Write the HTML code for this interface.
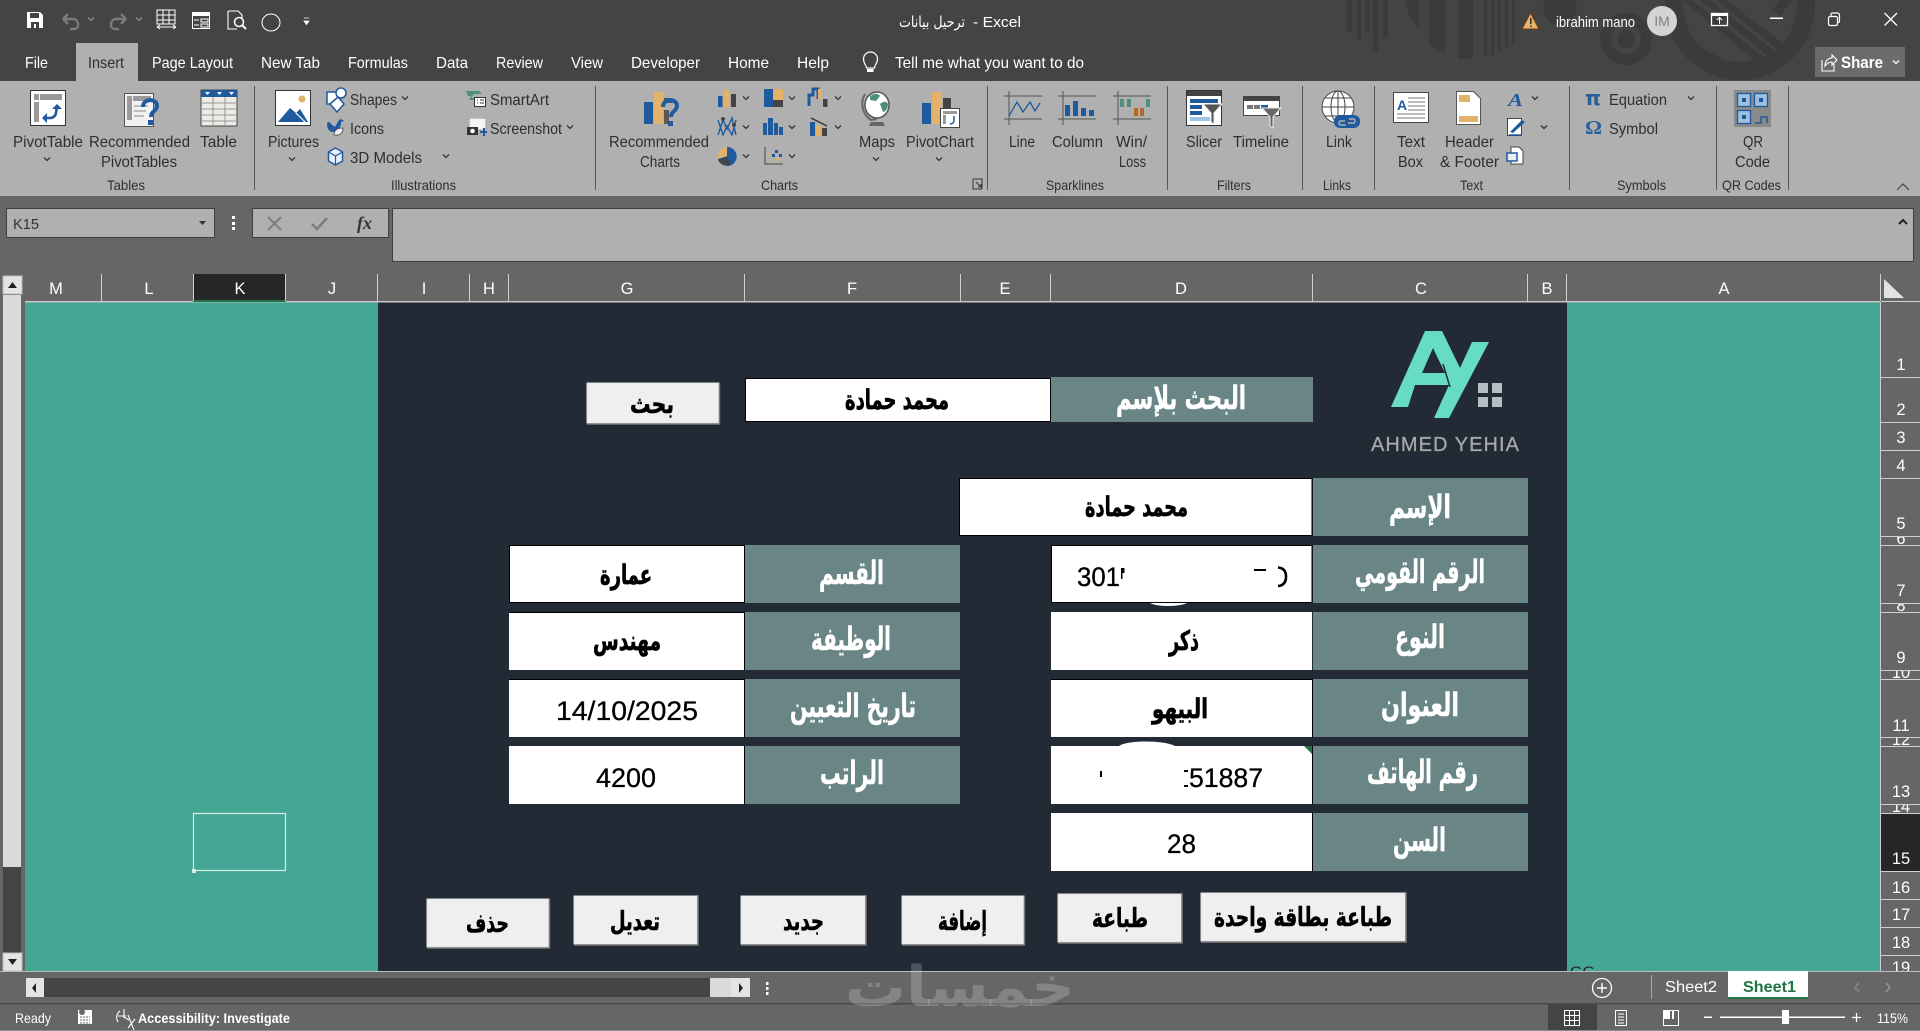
<!DOCTYPE html>
<html lang="en">
<head>
<meta charset="utf-8">
<title>Excel</title>
<style>
html,body{margin:0;padding:0;background:#666;width:1920px;height:1031px;overflow:hidden}
svg{display:block;position:absolute;left:0;top:0}
text{font-family:"Liberation Sans",sans-serif}
.w{fill:#fff;font-size:16px}
.k{fill:#2e2e2e;font-size:16px}
.g{fill:#2e2e2e;font-size:14px}
.h{fill:#fff;font-size:16.5px;text-anchor:middle}
.ar{font-family:"DejaVu Sans",sans-serif;font-weight:bold}
.lab{fill:#fff;font-size:32px;stroke:#fff;stroke-width:.5px}
.val{fill:#000;font-size:27px;stroke:#000;stroke-width:.7px}
.btn{fill:#000;font-size:26px;stroke:#000;stroke-width:.6px}
.num{fill:#000;font-size:27px;stroke:#000;stroke-width:.3px;font-family:"Liberation Sans",sans-serif}
.bt{fill:#efefef;stroke:#e4e4e4;stroke-width:1}
</style>
</head>
<body>
<svg width="1920" height="1031" viewBox="0 0 1920 1031" xmlns="http://www.w3.org/2000/svg">
<defs>
<path id="c" d="M-3-1.5 0 1.5 3-1.5" fill="none" stroke="#333" stroke-width="1.3"/>
<path id="cl" d="M-3-1.5 0 1.5 3-1.5" fill="none" stroke="#8c8c8c" stroke-width="1.3"/>
<path id="cw" d="M-3-1.5 0 1.5 3-1.5" fill="none" stroke="#fff" stroke-width="1.3"/>
<clipPath id="topclip"><rect x="1300" y="0" width="520" height="81"/></clipPath>
<clipPath id="sheetclip"><rect x="0" y="0" width="1920" height="971"/></clipPath>
</defs>

<!-- title bar -->
<rect width="1920" height="81" fill="#444"/>
<g clip-path="url(#topclip)" fill="#3b3b3b">
<rect x="1347" y="0" width="5" height="32"/><rect x="1357" y="0" width="4" height="41"/><rect x="1365" y="0" width="5" height="32"/><rect x="1373" y="0" width="5" height="52"/><rect x="1383" y="0" width="5" height="37"/>
<path d="M1405 0h14v30c-7-8-12-18-14-30z"/>
<path d="M1429 0h16v53l-16-8z"/><rect x="1458" y="0" width="15" height="59"/><rect x="1484" y="0" width="3" height="57"/><rect x="1491" y="0" width="3" height="55"/><rect x="1498" y="0" width="3" height="52"/><rect x="1505" y="0" width="3" height="47"/><rect x="1512" y="0" width="3" height="45"/>
<circle cx="1560" cy="8" r="17"/>
<circle cx="1626" cy="39" r="20.500" fill="none" stroke="#3b3b3b" stroke-width="11"/><circle cx="1626" cy="39" r="9"/>
<circle cx="1740" cy="5" r="66" fill="none" stroke="#3b3b3b" stroke-width="18"/>
<path d="M1683 0h9l75 60-7 5zM1700 0h9l67 52-7 5zM1717 0h9l58 44-7 5zM1685 38l60 34-14 1-40-22zM1780 0h12l-12 16-8-6z"/>
</g>

<!-- QAT -->
<path d="M27 12h13l3 3v13H27z" fill="#fff"/><rect x="30" y="13" width="9" height="5" fill="#444"/><rect x="31" y="22" width="8" height="6" fill="#444"/><rect x="34" y="24" width="2" height="4" fill="#fff"/>
<path d="M63 19l5-5M63 19l5 5M63 19h10a5 5 0 0 1 5 5v2a4 4 0 0 1-4 3h-4" fill="none" stroke="#7a7a7a" stroke-width="2.4"/>
<use href="#cl" x="91" y="19"/>
<path d="M126 19l-5-5M126 19l-5 5M126 19h-10a5 5 0 0 0-5 5v2a4 4 0 0 0 4 3h4" fill="none" stroke="#7a7a7a" stroke-width="2.4"/>
<use href="#cl" x="139" y="19"/>
<path d="M157 10h18v14h-18zM157 15h18M157 20h18M163 10v14M169 10v14M157 27h19M157 27l3-2M157 27l3 2M176 27l-3-2M176 27l-3 2" fill="none" stroke="#fff" stroke-width="1"/>
<rect x="192.500" y="12.500" width="17" height="16" fill="none" stroke="#fff"/><rect x="193" y="13" width="16" height="3" fill="#fff"/><path d="M194 20h5M194 25h5M201 19h7v3h-7zM201 24h7v3h-7z" fill="none" stroke="#fff"/>
<path d="M228 11h10l4 4v3M228 11v18h9" fill="none" stroke="#fff" stroke-width="1.1"/><circle cx="239" cy="22" r="4.500" fill="none" stroke="#fff" stroke-width="1.5"/><path d="M242 25l4 4" stroke="#fff" stroke-width="2"/>
<ellipse cx="271" cy="22.500" rx="9" ry="8.500" fill="none" stroke="#fff" stroke-width="1"/>
<path d="M304 18h5M304 21h5l-2.500 3.500z" fill="#fff" stroke="#fff" stroke-width=".8"/>

<text class="ar" x="899" y="27" textLength="66" lengthAdjust="spacingAndGlyphs" style="font-size:15px;fill:#fff;font-weight:normal">ترحيل بيانات</text>
<text class="w" x="973" y="27" textLength="48" lengthAdjust="spacingAndGlyphs" style="font-size:15px">-  Excel</text>

<path d="M1530.500 13l8.500 16h-17z" fill="#e9b36a" stroke="#6b3a12"/><rect x="1530" y="18" width="1.600" height="6" fill="#333"/><rect x="1530" y="25.500" width="1.600" height="1.600" fill="#333"/>
<text class="w" x="1556" y="27" textLength="79" lengthAdjust="spacingAndGlyphs" style="font-size:15px">ibrahim mano</text>
<circle cx="1662" cy="21" r="15" fill="#d4d4d4"/><text x="1662" y="26" text-anchor="middle" style="font-size:14px;fill:#808080">IM</text>
<rect x="1711.500" y="13.500" width="16" height="12" fill="none" stroke="#fff" stroke-width="1.300"/><rect x="1711" y="13" width="17" height="3" fill="#fff"/><path d="M1719.500 24v-6M1717 20l2.500-2.500 2.500 2.500" fill="none" stroke="#fff"/>
<rect x="1770" y="17.500" width="13" height="1.500" fill="#fff"/>
<rect x="1828.500" y="16.500" width="9" height="9" rx="1.500" fill="none" stroke="#fff" stroke-width="1.200"/><path d="M1831 16v-2a1.500 1.500 0 0 1 1.500-1h5a2 2 0 0 1 2 2v6a1.500 1.500 0 0 1-1.500 1.500h-1" fill="none" stroke="#fff" stroke-width="1.200"/>
<path d="M1884.500 13l12.500 12.500M1897 13l-12.500 12.500" stroke="#fff" stroke-width="1.300"/>

<!-- tabs -->
<rect x="76" y="43" width="62" height="38" fill="#b0b0b0"/>
<text class="w" x="25" y="68" textLength="23" lengthAdjust="spacingAndGlyphs">File</text>
<text class="k" x="88" y="68" textLength="36" lengthAdjust="spacingAndGlyphs">Insert</text>
<text class="w" x="152" y="68" textLength="81" lengthAdjust="spacingAndGlyphs">Page Layout</text>
<text class="w" x="261" y="68" textLength="59" lengthAdjust="spacingAndGlyphs">New Tab</text>
<text class="w" x="348" y="68" textLength="60" lengthAdjust="spacingAndGlyphs">Formulas</text>
<text class="w" x="436" y="68" textLength="32" lengthAdjust="spacingAndGlyphs">Data</text>
<text class="w" x="496" y="68" textLength="47" lengthAdjust="spacingAndGlyphs">Review</text>
<text class="w" x="571" y="68" textLength="32" lengthAdjust="spacingAndGlyphs">View</text>
<text class="w" x="631" y="68" textLength="69" lengthAdjust="spacingAndGlyphs">Developer</text>
<text class="w" x="728" y="68" textLength="41" lengthAdjust="spacingAndGlyphs">Home</text>
<text class="w" x="797" y="68" textLength="32" lengthAdjust="spacingAndGlyphs">Help</text>
<path d="M866.500 68c0-3-3-4-3-9a7 7 0 0 1 14 0c0 5-3 6-3 9z" fill="none" stroke="#fff" stroke-width="1.200"/><rect x="867" y="69" width="6.500" height="3" fill="#fff"/>
<text class="w" x="895" y="68" textLength="189" lengthAdjust="spacingAndGlyphs">Tell me what you want to do</text>
<rect x="1815" y="47" width="90" height="30" fill="#6b6b6b"/>
<path d="M1822 60v11h12v-7M1825 66c0-5 3-8 7-8v-3l5 5-5 5v-3c-3 0-5 1-7 4z" fill="none" stroke="#fff" stroke-width="1.100"/>
<text x="1841" y="68" textLength="42" lengthAdjust="spacingAndGlyphs" style="font-size:17px;font-weight:bold;fill:#fff">Share</text>
<use href="#cw" x="1896" y="62"/>

<!-- ribbon -->
<rect y="81" width="1920" height="115" fill="#b0b0b0"/>
<g fill="#555">
<rect x="254" y="86" width="1" height="104"/><rect x="595" y="86" width="1" height="104"/><rect x="987" y="86" width="1" height="104"/><rect x="1167" y="86" width="1" height="104"/><rect x="1302" y="86" width="1" height="104"/><rect x="1374" y="86" width="1" height="104"/><rect x="1569" y="86" width="1" height="104"/><rect x="1716" y="86" width="1" height="104"/><rect x="1788" y="86" width="1" height="104"/>
</g>

<!-- ribbon labels -->
<text class="k" x="13" y="147" textLength="70" lengthAdjust="spacingAndGlyphs">PivotTable</text><use href="#c" x="47" y="159"/>
<text class="k" x="89" y="147" textLength="101" lengthAdjust="spacingAndGlyphs">Recommended</text>
<text class="k" x="101" y="167" textLength="76" lengthAdjust="spacingAndGlyphs">PivotTables</text>
<text class="k" x="200" y="147" textLength="37" lengthAdjust="spacingAndGlyphs">Table</text>
<text class="g" x="107" y="190" textLength="38" lengthAdjust="spacingAndGlyphs">Tables</text>
<text class="k" x="268" y="147" textLength="51" lengthAdjust="spacingAndGlyphs">Pictures</text><use href="#c" x="292" y="159"/>
<text class="k" x="350" y="105" textLength="47" lengthAdjust="spacingAndGlyphs">Shapes</text><use href="#c" x="405" y="98"/>
<text class="k" x="350" y="134" textLength="34" lengthAdjust="spacingAndGlyphs">Icons</text>
<text class="k" x="350" y="163" textLength="72" lengthAdjust="spacingAndGlyphs">3D Models</text><use href="#c" x="446" y="156"/>
<text class="k" x="490" y="105" textLength="59" lengthAdjust="spacingAndGlyphs">SmartArt</text>
<text class="k" x="490" y="134" textLength="72" lengthAdjust="spacingAndGlyphs">Screenshot</text><use href="#c" x="570" y="127"/>
<text class="g" x="391" y="190" textLength="65" lengthAdjust="spacingAndGlyphs">Illustrations</text>
<text class="k" x="609" y="147" textLength="100" lengthAdjust="spacingAndGlyphs">Recommended</text>
<text class="k" x="640" y="167" textLength="40" lengthAdjust="spacingAndGlyphs">Charts</text>
<text class="k" x="859" y="147" textLength="36" lengthAdjust="spacingAndGlyphs">Maps</text><use href="#c" x="876" y="159"/>
<text class="k" x="906" y="147" textLength="68" lengthAdjust="spacingAndGlyphs">PivotChart</text><use href="#c" x="939" y="159"/>
<text class="g" x="761" y="190" textLength="37" lengthAdjust="spacingAndGlyphs">Charts</text>
<path d="M973 179h9v10M973 179v10h9M976 182l5 5M981 184v3h-3" fill="none" stroke="#333"/>
<text class="k" x="1009" y="147" textLength="26" lengthAdjust="spacingAndGlyphs">Line</text>
<text class="k" x="1052" y="147" textLength="51" lengthAdjust="spacingAndGlyphs">Column</text>
<text class="k" x="1116" y="147" textLength="31" lengthAdjust="spacingAndGlyphs">Win/</text>
<text class="k" x="1119" y="167" textLength="27" lengthAdjust="spacingAndGlyphs">Loss</text>
<text class="g" x="1046" y="190" textLength="58" lengthAdjust="spacingAndGlyphs">Sparklines</text>
<text class="k" x="1186" y="147" textLength="36" lengthAdjust="spacingAndGlyphs">Slicer</text>
<text class="k" x="1233" y="147" textLength="56" lengthAdjust="spacingAndGlyphs">Timeline</text>
<text class="g" x="1217" y="190" textLength="34" lengthAdjust="spacingAndGlyphs">Filters</text>
<text class="k" x="1326" y="147" textLength="26" lengthAdjust="spacingAndGlyphs">Link</text>
<text class="g" x="1323" y="190" textLength="28" lengthAdjust="spacingAndGlyphs">Links</text>
<text class="k" x="1397" y="147" textLength="28" lengthAdjust="spacingAndGlyphs">Text</text>
<text class="k" x="1398" y="167" textLength="25" lengthAdjust="spacingAndGlyphs">Box</text>
<text class="k" x="1445" y="147" textLength="49" lengthAdjust="spacingAndGlyphs">Header</text>
<text class="k" x="1440" y="167" textLength="59" lengthAdjust="spacingAndGlyphs">&amp; Footer</text>
<text class="g" x="1460" y="190" textLength="23" lengthAdjust="spacingAndGlyphs">Text</text>
<text class="k" x="1609" y="105" textLength="58" lengthAdjust="spacingAndGlyphs">Equation</text><use href="#c" x="1691" y="98"/>
<text class="k" x="1609" y="134" textLength="49" lengthAdjust="spacingAndGlyphs">Symbol</text>
<text class="g" x="1617" y="190" textLength="49" lengthAdjust="spacingAndGlyphs">Symbols</text>
<text class="k" x="1743" y="147" textLength="20" lengthAdjust="spacingAndGlyphs">QR</text>
<text class="k" x="1735" y="167" textLength="35" lengthAdjust="spacingAndGlyphs">Code</text>
<text class="g" x="1722" y="190" textLength="59" lengthAdjust="spacingAndGlyphs">QR Codes</text>
<path d="M1897 190l6-6 6 6" fill="none" stroke="#444" stroke-width="1.200"/>

<!-- PivotTable icon -->
<rect x="30.500" y="90.500" width="35" height="35" fill="#fff" stroke="#333"/><rect x="40" y="94" width="22" height="6" fill="#999"/><rect x="34" y="94" width="5" height="6" fill="#999"/><rect x="34" y="102" width="5" height="20" fill="#999"/>
<path d="M57 106l-1 7c-.500 3-3 5-6 5h-4" fill="none" stroke="#1f5a9e" stroke-width="2.600"/><path d="M52 109l5-5 5 5zM47 113l-5 5 5 5z" fill="#1f5a9e"/>
<!-- Recommended Pivot -->
<rect x="124.500" y="93.500" width="29" height="33" fill="#f2f2f2" stroke="#555"/><rect x="127" y="96" width="5" height="24" fill="#999"/><rect x="133" y="96" width="18" height="5" fill="#999"/><path d="M134 106h14M134 111h12M134 116h10" stroke="#bbb" stroke-width="2"/>
<path d="M143 107c0-9 14-9 14-1 0 5-6 5-6 11" fill="none" stroke="#1f5a9e" stroke-width="4"/><rect x="148" y="120" width="5" height="5" fill="#1f5a9e"/>
<!-- Table -->
<rect x="201" y="90" width="36" height="36" fill="#ecebe6" stroke="#444"/><rect x="201" y="90" width="36" height="7" fill="#1f5a9e"/>
<path d="M205 92h5l-2.500 3zM217 92h5l-2.500 3zM229 92h5l-2.500 3z" fill="#fff"/>
<path d="M201 103h36M201 109h36M201 115h36M201 121h36M213 97v29M225 97v29" stroke="#999" stroke-width="1" fill="none"/>
<!-- Pictures -->
<rect x="275.500" y="90.500" width="35" height="35" fill="#fff" stroke="#333"/><circle cx="302" cy="99" r="3.500" fill="#e2b26a"/>
<path d="M278 122l12-14 6 5 4-4 8 13z" fill="#1f5a9e"/><path d="M296 113l10 10" stroke="#fff" stroke-width="1.200"/>
<!-- Shapes -->
<rect x="327" y="92" width="12" height="12" fill="#fff" stroke="#1f5a9e" stroke-width="1.500"/><path d="M338 97l6 7-7 8-7-8z" fill="#fff" stroke="#1f5a9e" stroke-width="1.500"/><circle cx="341" cy="93" r="5" fill="#fff" stroke="#1f5a9e" stroke-width="1.500"/>
<!-- Icons -->
<path d="M327 124c0-2 3-3 4 0l4 3c2-3 3-7 6-8l3 2-3 1c0 6-3 10-8 10-4 0-6-4-6-8z" fill="#1f5a9e"/><path d="M334 135c0-5 4-7 9-7 0 5-3 8-9 7z" fill="#eee" stroke="#444" stroke-width=".8"/>
<!-- 3D -->
<path d="M335.500 148l7 4v9l-7 4-7-4v-9z" fill="#eef" stroke="#1f5a9e" stroke-width="1.500"/><path d="M328.500 152l7 4 7-4M335.500 156v9" fill="none" stroke="#1f5a9e" stroke-width="1.200"/>
<!-- SmartArt -->
<path d="M466 91h13l3 3h-8l-3 4h8l-2 2h-8l2-4h-3z" fill="#4e8f80"/><rect x="474.500" y="97.500" width="11" height="9" fill="#fff" stroke="#333"/><path d="M477 100h1M477 103h1M480 100h4M480 103h4" stroke="#333"/>
<!-- Screenshot -->
<rect x="470" y="119" width="15" height="10" fill="#f5f5f5" stroke="#eee" stroke-dasharray="1.500 1"/><rect x="467" y="127" width="11" height="8" fill="#333"/><circle cx="472.500" cy="131" r="2.300" fill="#fff"/><path d="M484 128v8M480 132h7" stroke="#1f5a9e" stroke-width="2"/>
<!-- Recommended charts -->
<rect x="644" y="102" width="9" height="22" fill="#1f5a9e"/><rect x="654" y="92" width="9" height="32" fill="#e2b26a"/><rect x="664" y="98" width="8" height="5" fill="#555"/>
<path d="M663 107c0-9 14-9 14-1 0 5-6 5-6 11" fill="none" stroke="#1f5a9e" stroke-width="4"/><rect x="668" y="121" width="5" height="5" fill="#1f5a9e"/><rect x="664" y="110" width="5" height="14" fill="#444" opacity=".8"/>
<!-- chart minis -->
<rect x="718" y="96" width="4.500" height="11" fill="#1f5a9e"/><rect x="724" y="90" width="5" height="17" fill="#e2b26a"/><rect x="731" y="94" width="5" height="13" fill="#444"/><use href="#c" x="746" y="98"/>
<rect x="764" y="89" width="9" height="18" fill="#1f5a9e"/><rect x="773" y="89" width="10" height="11" fill="#e2b26a"/><rect x="773" y="100" width="10" height="7" fill="#444"/><use href="#c" x="792" y="98"/>
<path d="M809 106v-11h4v-6h5v10" fill="none" stroke="#1f5a9e" stroke-width="3"/><rect x="818" y="89" width="4" height="10" fill="#e2b26a"/><rect x="823" y="99" width="4.500" height="8" fill="#444"/><use href="#c" x="838" y="98"/>
<path d="M718 135l5-15 4 9 5-11 4 17M718 120l5 15 4-9 5 9 4-15" fill="none" stroke="#1f5a9e" stroke-width="1.400"/><circle cx="723" cy="119" r="2" fill="#444"/><circle cx="734" cy="125" r="2" fill="#444"/><use href="#c" x="746" y="127"/>
<rect x="763" y="123" width="4" height="12" fill="#1f5a9e"/><rect x="768" y="118" width="5" height="17" fill="#1f5a9e"/><rect x="774" y="123" width="4" height="12" fill="#1f5a9e"/><rect x="779" y="127" width="4" height="8" fill="#1f5a9e"/><use href="#c" x="792" y="127"/>
<rect x="810" y="122" width="5" height="14" fill="#1f5a9e"/><rect x="816" y="126" width="5" height="10" fill="#e2b26a"/><rect x="822" y="128" width="5" height="8" fill="#444"/><path d="M811 118l16 8" stroke="#333" stroke-width="1.300"/><use href="#c" x="838" y="127"/>
<path d="M727 147a9.500 9.500 0 1 1-9 12l9-3z" fill="#1f5a9e"/><path d="M727 147v9l-9 3a9.500 9.500 0 0 1 9-12z" fill="#e2b26a"/><path d="M718 160l9-3 4 7a9.500 9.500 0 0 1-13-4z" fill="#444"/><use href="#c" x="746" y="156"/>
<path d="M765 147v17h18" fill="none" stroke="#444"/><g fill="#e2b26a"><rect x="767" y="153" width="3" height="3"/><rect x="776" y="158" width="3" height="3"/></g><g fill="#1f5a9e"><rect x="772" y="154" width="3" height="3"/><rect x="775" y="150" width="3" height="3"/><rect x="779" y="154" width="3" height="3"/></g><use href="#c" x="792" y="156"/>
<!-- Maps -->
<ellipse cx="877" cy="105" rx="12" ry="13" fill="#fff" stroke="#555" stroke-width="1.500"/><path d="M870 96c4-3 8-3 10 0l-4 5-6-1zM880 104c3-3 7-3 8 0 0 5-3 8-5 8z" fill="#4e8f80"/><path d="M865 94c-5 8-3 20 6 26l6-1" fill="none" stroke="#666" stroke-width="2"/><path d="M871 122h12l2 4h-16z" fill="#666"/>
<!-- PivotChart -->
<rect x="922" y="103" width="9" height="21" fill="#1f5a9e"/><rect x="932" y="92" width="10" height="32" fill="#e2b26a"/><rect x="943" y="98" width="8" height="10" fill="#444"/>
<rect x="940.500" y="108.500" width="19" height="19" fill="#fff" stroke="#444"/><rect x="943" y="111" width="14" height="3" fill="#999"/><rect x="943" y="115" width="3" height="9" fill="#999"/><path d="M954 116v4c0 3-2 4-4 4" fill="none" stroke="#1f5a9e" stroke-width="1.500"/>
<!-- Sparklines -->
<path d="M1004 96h38M1004 119h38M1009 91v34" stroke="#555" fill="none"/><path d="M1009 116l8-14 6 10 7-10 5 9 5-8" fill="none" stroke="#1f5a9e" stroke-width="1.300"/>
<path d="M1058 96h38M1058 119h38M1063 91v34" stroke="#555" fill="none"/><rect x="1065" y="105" width="5" height="11" fill="#1f5a9e"/><rect x="1073" y="101" width="5" height="15" fill="#1f5a9e"/><rect x="1081" y="108" width="5" height="8" fill="#1f5a9e"/><rect x="1089" y="110" width="5" height="6" fill="#1f5a9e"/>
<path d="M1113 96h38M1113 119h38M1118 91v34" stroke="#555" fill="none"/><rect x="1120" y="99" width="4" height="8" fill="#4e8f80"/><rect x="1127" y="99" width="4" height="8" fill="#4e8f80"/><rect x="1134" y="108" width="4" height="8" fill="#b8681e"/><rect x="1140" y="108" width="4" height="8" fill="#b8681e"/><rect x="1146" y="99" width="4" height="8" fill="#4e8f80"/>
<!-- Slicer -->
<rect x="1186.500" y="90.500" width="35" height="35" fill="#fff" stroke="#333"/><rect x="1187" y="91" width="34" height="5" fill="#444"/><g fill="#1f5a9e"><rect x="1190" y="99" width="28" height="4"/><rect x="1190" y="105" width="12" height="4"/><rect x="1190" y="111" width="12" height="4"/></g><rect x="1190" y="117" width="20" height="4" fill="#9ec5e8"/>
<path d="M1203 104h19l-8 9v11l-3-2v-9z" fill="#555" stroke="#eee"/>
<!-- Timeline -->
<rect x="1243.500" y="96.500" width="36" height="19" fill="#fff" stroke="#444"/><rect x="1244" y="97" width="35" height="4" fill="#444"/><g fill="#777"><rect x="1247" y="105" width="6" height="4"/><rect x="1254" y="105" width="6" height="4"/></g><rect x="1261" y="105" width="7" height="4" fill="#1f5a9e"/>
<path d="M1262 108h19l-8 9v11l-3-2v-9z" fill="#666" stroke="#eee"/>
<!-- Link -->
<circle cx="1338" cy="107" r="16" fill="#fff" stroke="#444"/><ellipse cx="1338" cy="107" rx="7" ry="16" fill="none" stroke="#444"/><path d="M1322 107h32M1325 98h26M1325 116h26M1338 91v32" stroke="#444" fill="none"/>
<rect x="1334" y="115" width="26" height="13" rx="6" fill="#1f5a9e"/><path d="M1345 121h-5a2.500 2.500 0 0 0 0 4h6M1349 119h5a2.500 2.500 0 0 1 0 4h-6" fill="none" stroke="#b0b0b0" stroke-width="1.500"/>
<!-- Text Box -->
<rect x="1393.500" y="92.500" width="35" height="30" fill="#fff" stroke="#444"/><text x="1397" y="110" style="font-size:14px;font-weight:bold;fill:#1f5a9e">A</text><path d="M1408 98h17M1408 102h17M1408 106h17M1408 110h17M1397 114h28M1397 118h28" stroke="#777"/>
<!-- Header -->
<path d="M1456.500 91.500h17l7 7v26h-24z" fill="#fff" stroke="#555"/><rect x="1459" y="95" width="11" height="7" fill="#e2b26a"/><rect x="1459" y="116" width="19" height="6" fill="#e2b26a"/>
<!-- wordart etc -->
<text x="1508" y="106" textLength="15" lengthAdjust="spacingAndGlyphs" style="font-size:18px;font-style:italic;font-weight:bold;fill:#1f5a9e;font-family:'Liberation Serif',serif">A</text><use href="#c" x="1535" y="98"/>
<rect x="1507.500" y="118.500" width="14" height="17" fill="#fff" stroke="#444"/><path d="M1510 132l12-12 3 2-12 11z" fill="#1f5a9e"/><path d="M1509 135h12" stroke="#1f5a9e" stroke-width="1.500"/><use href="#c" x="1544" y="127"/>
<path d="M1511 147h8l4 4v13h-12z" fill="#fff" stroke="#444"/><rect x="1507" y="153" width="10" height="8" fill="#e8eef5" stroke="#1f5a9e" stroke-width="1.500"/>
<!-- symbols -->
<text x="1585" y="105" textLength="16" lengthAdjust="spacingAndGlyphs" style="font-size:20px;font-weight:bold;fill:#2a6099;font-family:'DejaVu Sans',sans-serif">π</text>
<text x="1585" y="134" textLength="17" lengthAdjust="spacingAndGlyphs" style="font-size:20px;font-weight:bold;fill:#2a6099;font-family:'Liberation Serif',serif">Ω</text>
<!-- QR -->
<rect x="1734" y="90" width="37" height="37" fill="#8a8a8a"/><g fill="#9cc0dd" stroke="#1f5a9e" stroke-width="1.300"><rect x="1737.500" y="93.500" width="13" height="13"/><rect x="1754.500" y="93.500" width="13" height="13"/><rect x="1737.500" y="110.500" width="13" height="13"/></g><g fill="#1f5a9e"><rect x="1742" y="98" width="4" height="4"/><rect x="1759" y="98" width="4" height="4"/><rect x="1742" y="115" width="4" height="4"/></g><path d="M1755 123h6v-6h6v6" fill="none" stroke="#1f5a9e" stroke-width="1.500"/>

<!-- formula bar -->
<rect y="196" width="1920" height="835" fill="#666"/>
<rect x="6.500" y="208.500" width="208" height="29" fill="#b0b0b0" stroke="#3f3f3f"/>
<text x="13" y="229" textLength="26" lengthAdjust="spacingAndGlyphs" style="font-size:15px;fill:#333">K15</text>
<path d="M199 221h7l-3.500 4z" fill="#333"/>
<g fill="#fff"><rect x="232" y="216" width="3" height="3"/><rect x="232" y="222" width="3" height="3"/><rect x="232" y="227" width="3" height="3"/></g>
<rect x="252.500" y="208.500" width="136" height="29" fill="#b0b0b0" stroke="#3f3f3f"/>
<path d="M268 217l13 13M281 217l-13 13" stroke="#7d7d7d" stroke-width="2"/>
<path d="M312 224l5 5 10-11" fill="none" stroke="#7d7d7d" stroke-width="2.600"/>
<text x="357" y="229" textLength="15" lengthAdjust="spacingAndGlyphs" style="font-family:'Liberation Serif',serif;font-style:italic;font-weight:bold;font-size:18px;fill:#333">fx</text>
<rect x="392.500" y="208.500" width="1521" height="53" fill="#b0b0b0" stroke="#3f3f3f"/>
<path d="M1899 224l4-4 4 4" fill="none" stroke="#222" stroke-width="2"/>

<!-- sheet -->
<g clip-path="url(#sheetclip)">
<rect x="25" y="302" width="353" height="669" fill="#44a694"/>
<rect x="378" y="302" width="1189" height="669" fill="#222a35"/>
<rect x="1567" y="302" width="313" height="669" fill="#44a694"/>
<text x="1570" y="976" textLength="25" lengthAdjust="spacingAndGlyphs" style="font-size:14px;fill:#222">GG</text>
</g>

<!-- col header -->
<rect x="193" y="274" width="93" height="27" fill="#262626"/>
<rect x="25" y="301" width="1855" height="1.500" fill="#c8c8c8"/>
<rect x="193" y="300" width="93" height="2" fill="#217346"/>
<g fill="#cfcfcf">
<rect x="101" y="274" width="1" height="27"/><rect x="193" y="274" width="1" height="27"/><rect x="285" y="274" width="1" height="27"/><rect x="377" y="274" width="1" height="27"/><rect x="469" y="274" width="1" height="27"/><rect x="508" y="274" width="1" height="27"/><rect x="744" y="274" width="1" height="27"/><rect x="960" y="274" width="1" height="27"/><rect x="1050" y="274" width="1" height="27"/><rect x="1312" y="274" width="1" height="27"/><rect x="1527" y="274" width="1" height="27"/><rect x="1566" y="274" width="1" height="27"/><rect x="1880" y="274" width="1" height="27"/>
</g>
<text class="h" x="56" y="294">M</text><text class="h" x="149" y="294">L</text><text class="h" x="240" y="294">K</text><text class="h" x="332" y="294">J</text><text class="h" x="424" y="294">I</text><text class="h" x="489" y="294">H</text><text class="h" x="627" y="294">G</text><text class="h" x="852" y="294">F</text><text class="h" x="1005" y="294">E</text><text class="h" x="1181" y="294">D</text><text class="h" x="1421" y="294">C</text><text class="h" x="1547" y="294">B</text><text class="h" x="1724" y="294">A</text>
<path d="M1884 279l20 19h-20z" fill="#e2e2e2"/>

<!-- row header -->
<rect x="1880" y="302" width="1" height="669" fill="#cfcfcf"/>
<rect x="1881" y="814" width="39" height="57" fill="#262626"/>
<g fill="#d0d0d0">
<rect x="1881" y="301" width="39" height="1"/><rect x="1881" y="377" width="39" height="1"/><rect x="1881" y="422" width="39" height="1"/><rect x="1881" y="450" width="39" height="1"/><rect x="1881" y="478" width="39" height="1"/><rect x="1881" y="536" width="39" height="1"/><rect x="1881" y="545" width="39" height="1"/><rect x="1881" y="603" width="39" height="1"/><rect x="1881" y="612" width="39" height="1"/><rect x="1881" y="670" width="39" height="1"/><rect x="1881" y="679" width="39" height="1"/><rect x="1881" y="737" width="39" height="1"/><rect x="1881" y="746" width="39" height="1"/><rect x="1881" y="804" width="39" height="1"/><rect x="1881" y="813" width="39" height="1"/><rect x="1881" y="871" width="39" height="1"/><rect x="1881" y="899" width="39" height="1"/><rect x="1881" y="927" width="39" height="1"/><rect x="1881" y="955" width="39" height="1"/>
</g>
<text class="h" x="1901" y="370">1</text><text class="h" x="1901" y="415">2</text><text class="h" x="1901" y="443">3</text><text class="h" x="1901" y="471">4</text><text class="h" x="1901" y="529">5</text><text class="h" x="1901" y="596">7</text><text class="h" x="1901" y="663">9</text><text class="h" x="1901" y="731">11</text><text class="h" x="1901" y="797">13</text><text class="h" x="1901" y="864">15</text><text class="h" x="1901" y="893">16</text><text class="h" x="1901" y="920">17</text><text class="h" x="1901" y="948">18</text>
<svg x="1881" y="956" width="39" height="15"><text class="h" x="20" y="17">19</text></svg>
<svg x="1881" y="537" width="39" height="8"><text class="h" x="20" y="7">6</text></svg>
<svg x="1881" y="604" width="39" height="8"><text class="h" x="20" y="7">8</text></svg>
<svg x="1881" y="671" width="39" height="8"><text class="h" x="20" y="7">10</text></svg>
<svg x="1881" y="738" width="39" height="8"><text class="h" x="20" y="7">12</text></svg>
<svg x="1881" y="805" width="39" height="8"><text class="h" x="20" y="7">14</text></svg>

<!-- selection -->
<rect x="193.500" y="813.500" width="92" height="57" fill="none" stroke="#d8efe6" stroke-width="1.200"/>
<rect x="192" y="869" width="4" height="4" fill="#d8efe6"/>

<!-- scrollbars -->
<rect x="3" y="276" width="19" height="18" fill="#e4e4e4" stroke="#bbb"/><path d="M8 288l4.500-6 4.500 6z" fill="#222"/>
<rect x="3" y="295" width="18" height="572" fill="#dadada"/>
<rect x="3" y="867" width="18" height="86" fill="#454545"/>
<rect x="3" y="953" width="19" height="18" fill="#e4e4e4" stroke="#bbb"/><path d="M8 959l4.500 6 4.500-6z" fill="#222"/>
<rect y="971" width="1920" height="1" fill="#bdbdbd"/>
<rect x="26" y="978" width="18" height="19" fill="#e4e4e4"/><path d="M36 983l-4 5 4 5z" fill="#222"/>
<rect x="44" y="978" width="666" height="19" fill="#454545"/>
<rect x="710" y="978" width="21" height="19" fill="#dadada"/>
<rect x="731" y="978" width="19" height="19" fill="#e4e4e4"/><path d="M739 983l4 5-4 5z" fill="#222"/>
<g fill="#fff"><rect x="766" y="982" width="2.500" height="3"/><rect x="766" y="987" width="2.500" height="3"/><rect x="766" y="992" width="2.500" height="3"/></g>

<!-- sheet tabs -->
<circle cx="1602" cy="988" r="9.500" fill="none" stroke="#fff" stroke-width="1.300"/><path d="M1602 983v10M1597 988h10" stroke="#fff" stroke-width="1.400"/>
<rect x="1651" y="975" width="1" height="24" fill="#aaa"/>
<text x="1665" y="992" textLength="52" lengthAdjust="spacingAndGlyphs" style="font-size:16px;fill:#fff">Sheet2</text>
<rect x="1728" y="971" width="80" height="28" fill="#fff"/><rect x="1728" y="997" width="80" height="2" fill="#217346"/>
<text x="1743" y="992" textLength="53" lengthAdjust="spacingAndGlyphs" style="font-size:16px;font-weight:bold;fill:#217346">Sheet1</text>
<path d="M1859 983l-4 4.500 4 4.500" fill="none" stroke="#888" stroke-width="1.500"/><path d="M1886 983l4 4.500-4 4.500" fill="none" stroke="#999" stroke-width="1.500"/>

<!-- status bar -->
<rect y="1003" width="1920" height="1.500" fill="#4a4a4a"/>
<rect y="1030" width="1920" height="1" fill="#8a8a8a"/>
<text x="15" y="1023" textLength="36" lengthAdjust="spacingAndGlyphs" style="font-size:14px;fill:#fff">Ready</text>
<rect x="78" y="1010" width="14" height="14" fill="#fff"/><circle cx="82" cy="1012" r="3" fill="#666"/><path d="M80 1017h10M80 1020h10M80 1023h10" stroke="#666" stroke-dasharray="2 1"/>
<path d="M120 1011a8 8 0 0 0-2 11M124 1009v9M118 1016h8M124 1017l5 3M128 1015l6 15M135 1019l-7 9" fill="none" stroke="#fff" stroke-width="1.100"/>
<text x="138" y="1023" textLength="152" lengthAdjust="spacingAndGlyphs" style="font-size:14px;font-weight:bold;fill:#fff">Accessibility: Investigate</text>
<rect x="1548" y="1004.500" width="49" height="25.500" fill="#444"/>
<path d="M1564.500 1010.500h15v15h-15zM1564.500 1015.500h15M1564.500 1020.500h15M1569.500 1010.500v15M1574.500 1010.500v15" fill="none" stroke="#fff"/>
<path d="M1615.500 1010.500h11v15h-11zM1618 1014h6M1618 1017h6M1618 1020h6M1618 1023h6" fill="none" stroke="#fff"/>
<rect x="1663.500" y="1010.500" width="15" height="15" fill="none" stroke="#fff"/><rect x="1664" y="1011" width="6" height="8" fill="#fff"/><rect x="1672" y="1011" width="2" height="8" fill="#fff"/>
<rect x="1704" y="1016.500" width="8" height="1.500" fill="#fff"/>
<rect x="1720" y="1016.500" width="125" height="1.500" fill="#fff"/><rect x="1782" y="1010" width="7" height="14" fill="#fff"/>
<path d="M1852 1017.500h9M1856.500 1013v9" stroke="#fff" stroke-width="1.200"/>
<text x="1877" y="1023" textLength="31" lengthAdjust="spacingAndGlyphs" style="font-size:14px;fill:#fff">115%</text>

<!-- logo -->
<path d="M1425 331H1442L1460 368 1472 342H1489L1449 418H1434L1449 385H1415L1408 407H1391zM1433 348 1422 373H1445z" fill="#66dcc6" fill-rule="evenodd"/>
<path d="M1443 364 1450 387" stroke="#222a35" stroke-width="1.500" fill="none"/>
<g fill="#b3bfc2"><rect x="1478" y="383" width="10" height="10"/><rect x="1492" y="383" width="10" height="10"/><rect x="1478" y="397" width="10" height="10"/><rect x="1492" y="397" width="10" height="10"/></g>
<text x="1371" y="451" textLength="148" lengthAdjust="spacing" style="font-size:20px;fill:#a6a9a9;stroke:#a6a9a9;stroke-width:.3px">AHMED YEHIA</text>

<!-- form labels -->
<g fill="#6a8585">
<rect x="1051" y="377" width="262" height="45"/>
<rect x="1313" y="478" width="215" height="58"/><rect x="1313" y="545" width="215" height="58"/><rect x="1313" y="612" width="215" height="58"/><rect x="1313" y="679" width="215" height="58"/><rect x="1313" y="746" width="215" height="58"/><rect x="1313" y="813" width="215" height="58"/>
<rect x="745" y="545" width="215" height="58"/><rect x="745" y="612" width="215" height="58"/><rect x="745" y="679" width="215" height="58"/><rect x="745" y="746" width="215" height="58"/>
</g>
<!-- form values -->
<g fill="#fff" stroke="#000" stroke-width="1">
<rect x="745.500" y="378.500" width="305" height="43"/>
<rect x="959.500" y="478.500" width="352.500" height="57"/>
<rect x="1051.500" y="545.500" width="260.500" height="57"/>
<rect x="509.500" y="545.500" width="235" height="57"/>
</g>
<g fill="#fff">
<rect x="1051" y="612" width="261" height="58"/><rect x="1051" y="679" width="261" height="58"/><rect x="1051" y="746" width="261" height="58"/><rect x="1051" y="813" width="261" height="58"/>
<rect x="509" y="612" width="235" height="58"/><rect x="509" y="679" width="235" height="58"/><rect x="509" y="746" width="235" height="58"/>
</g>
<g fill="#000">
<rect x="1312" y="679" width="1" height="58"/><rect x="1312" y="746" width="1" height="58"/><rect x="1312" y="813" width="1" height="58"/>
<rect x="1051" y="679" width="261" height="1"/>
<rect x="744" y="612" width="1" height="58"/><rect x="744" y="679" width="1" height="58"/><rect x="744" y="746" width="1" height="58"/>
<rect x="509" y="612" width="235" height="1"/><rect x="509" y="679" width="235" height="1"/>
</g>
<path d="M1304 746h8v8z" fill="#217346"/>
<path d="M1150 603c8 4 28 4 37 0z" fill="#fff"/>
<path d="M1119 746c8-6 45-6 56 0z" fill="#fff"/>

<!-- form label text -->
<text class="ar lab" x="1116" y="409" textLength="130" lengthAdjust="spacingAndGlyphs">البحث بلإسم</text>
<text class="ar lab" x="1389" y="518" textLength="62" lengthAdjust="spacingAndGlyphs">الإسم</text>
<text class="ar lab" x="1355" y="583" textLength="130" lengthAdjust="spacingAndGlyphs">الرقم القومي</text>
<text class="ar lab" x="1395" y="648" textLength="50" lengthAdjust="spacingAndGlyphs">النوع</text>
<text class="ar lab" x="1381" y="716" textLength="78" lengthAdjust="spacingAndGlyphs">العنوان</text>
<text class="ar lab" x="1367" y="783" textLength="111" lengthAdjust="spacingAndGlyphs">رقم الهاتف</text>
<text class="ar lab" x="1393" y="851" textLength="53" lengthAdjust="spacingAndGlyphs">السن</text>
<text class="ar lab" x="819" y="584" textLength="65" lengthAdjust="spacingAndGlyphs">القسم</text>
<text class="ar lab" x="811" y="650" textLength="80" lengthAdjust="spacingAndGlyphs">الوظيفة</text>
<text class="ar lab" x="790" y="717" textLength="126" lengthAdjust="spacingAndGlyphs">تاريخ التعيين</text>
<text class="ar lab" x="820" y="784" textLength="64" lengthAdjust="spacingAndGlyphs">الراتب</text>

<!-- form values text -->
<text class="ar val" x="845" y="409" textLength="104" lengthAdjust="spacingAndGlyphs">محمد حمادة</text>
<text class="ar val" x="1085" y="516" textLength="103" lengthAdjust="spacingAndGlyphs">محمد حمادة</text>
<text class="ar val" x="600" y="584" textLength="52" lengthAdjust="spacingAndGlyphs">عمارة</text>
<text class="ar val" x="593" y="650" textLength="68" lengthAdjust="spacingAndGlyphs">مهندس</text>
<text class="ar val" x="1169" y="650" textLength="30" lengthAdjust="spacingAndGlyphs">ذكر</text>
<text class="ar val" x="1152" y="718" textLength="56" lengthAdjust="spacingAndGlyphs">البيهو</text>
<text class="num" x="1077" y="586" textLength="43" lengthAdjust="spacingAndGlyphs">301</text>
<rect x="1121" y="568" width="3.500" height="5" fill="#000"/><rect x="1121" y="573" width="1.500" height="6" fill="#000"/>
<rect x="1254" y="569" width="12" height="2" fill="#000"/>
<path d="M1278 567.500c6 .5 8 4 8 9s-2 9-8 9.500" fill="none" stroke="#000" stroke-width="2.600"/>
<rect x="1100" y="771" width="2" height="6" fill="#000"/>
<rect x="1184" y="770" width="4" height="2" fill="#000"/><rect x="1184" y="785" width="4" height="2" fill="#000"/>
<text class="num" x="1189" y="787" textLength="74" lengthAdjust="spacingAndGlyphs">51887</text>
<text class="num" x="1167" y="853" textLength="29" lengthAdjust="spacingAndGlyphs">28</text>
<text class="num" x="556" y="720" textLength="142" lengthAdjust="spacingAndGlyphs">14/10/2025</text>
<text class="num" x="596" y="787" textLength="60" lengthAdjust="spacingAndGlyphs">4200</text>

<!-- buttons -->
<path d="M587 383h132v40H587z" class="bt"/><path d="M719.500 383v41H587" fill="none" stroke="#777" stroke-width="1.500"/>
<text class="ar btn" x="630" y="413" textLength="44" lengthAdjust="spacingAndGlyphs">بحث</text>
<path d="M1058 894h124v48h-124z" class="bt"/><path d="M1182 894v49h-124" fill="none" stroke="#777" stroke-width="1.500"/>
<text class="ar btn" x="1092" y="927" textLength="56" lengthAdjust="spacingAndGlyphs">طباعة</text>
<path d="M1201 893h205v48h-205z" class="bt"/><path d="M1406 893v49h-205" fill="none" stroke="#777" stroke-width="1.500"/>
<text class="ar btn" x="1214" y="926" textLength="178" lengthAdjust="spacingAndGlyphs">طباعة بطاقة واحدة</text>
<path d="M427 899h122v48H427z" class="bt"/><path d="M549.500 899v49H427" fill="none" stroke="#777" stroke-width="1.500"/>
<text class="ar btn" x="466" y="932" textLength="43" lengthAdjust="spacingAndGlyphs">حذف</text>
<path d="M574 896h124v48H574z" class="bt"/><path d="M698 896v49H574" fill="none" stroke="#777" stroke-width="1.500"/>
<text class="ar btn" x="610" y="930" textLength="50" lengthAdjust="spacingAndGlyphs">تعديل</text>
<path d="M741 896h125v48H741z" class="bt"/><path d="M866 896v49H741" fill="none" stroke="#777" stroke-width="1.500"/>
<text class="ar btn" x="783" y="930" textLength="41" lengthAdjust="spacingAndGlyphs">جديد</text>
<path d="M902 896h122v48H902z" class="bt"/><path d="M1024.500 896v49H902" fill="none" stroke="#777" stroke-width="1.500"/>
<text class="ar btn" x="938" y="930" textLength="49" lengthAdjust="spacingAndGlyphs">إضافة</text>

<!-- watermark -->
<text class="ar" x="845" y="1006" textLength="230" lengthAdjust="spacingAndGlyphs" style="font-size:56px;fill:#fff;fill-opacity:.2">خمسات</text>
</svg>
</body>
</html>
